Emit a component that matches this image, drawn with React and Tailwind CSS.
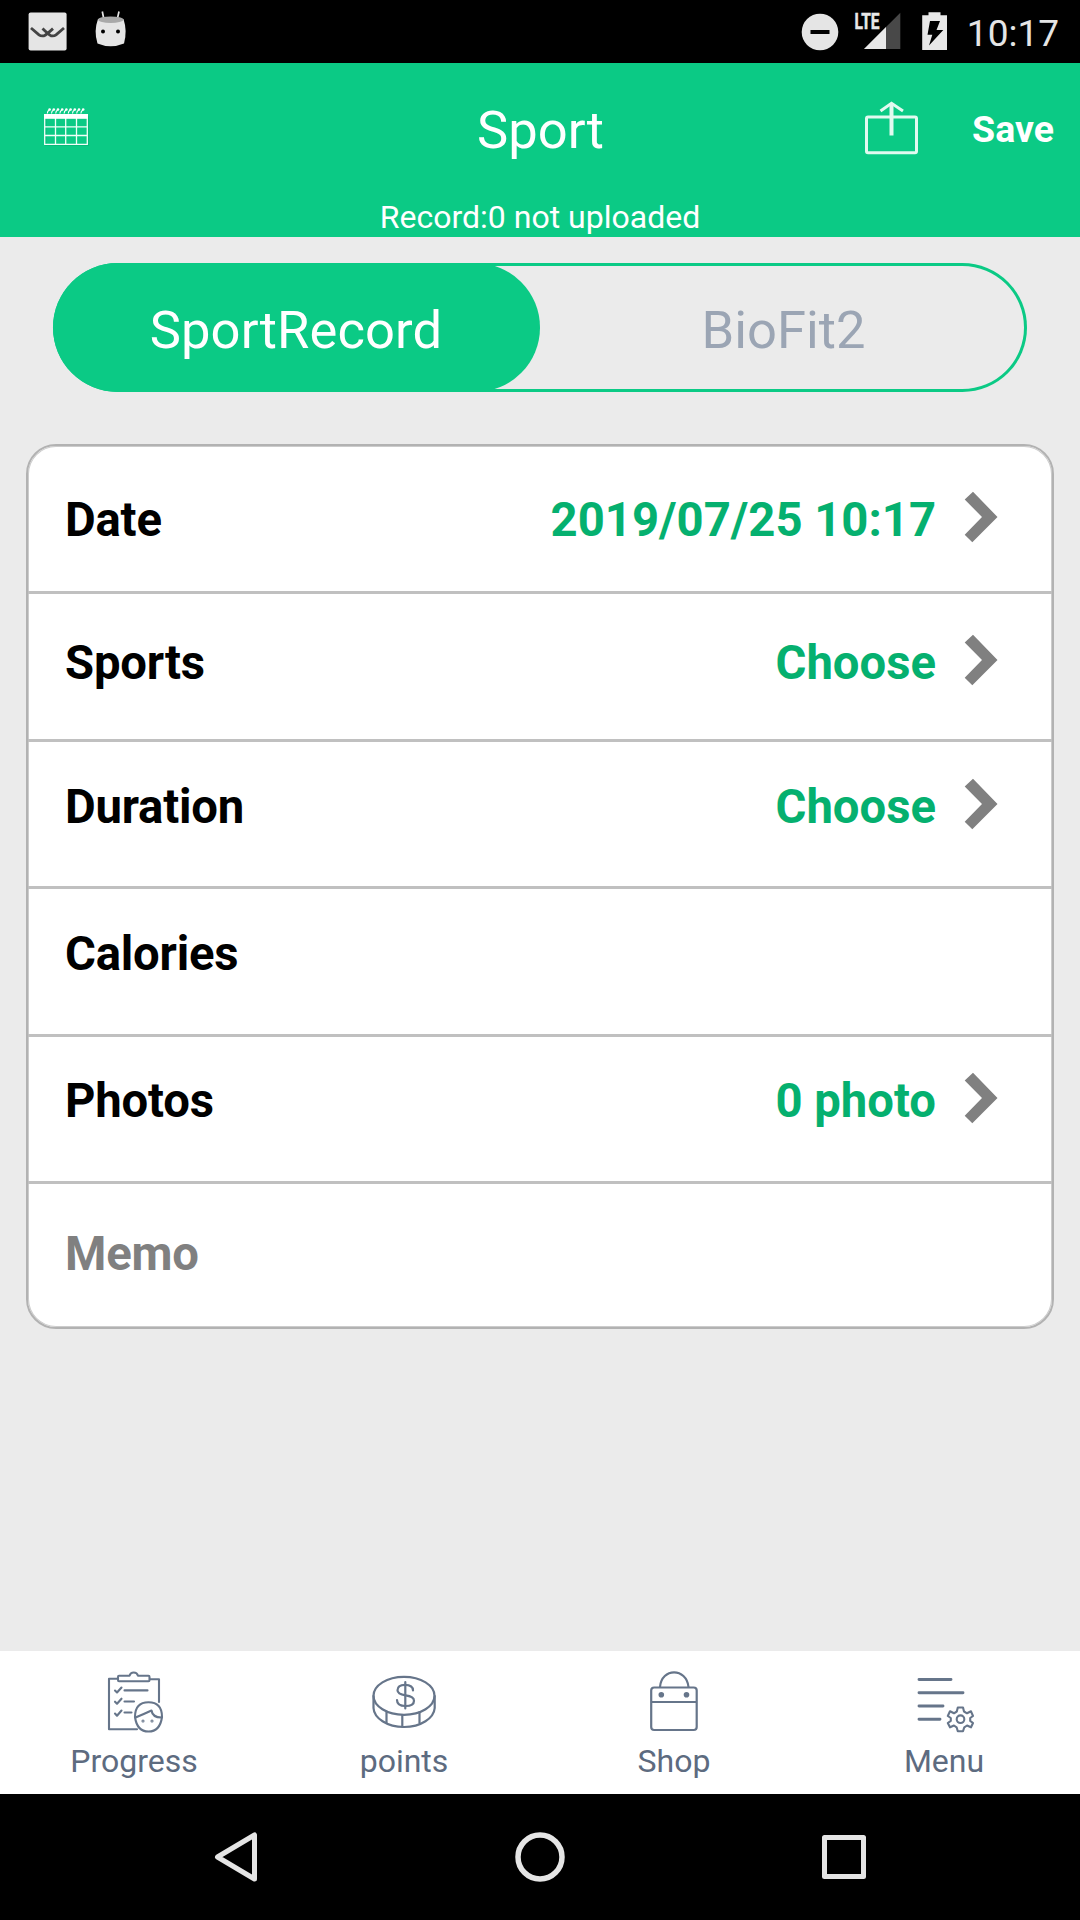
const ROWS = [
  { label: "Date", value: "2019/07/25 10:17", box: "h-[148px] pt-[3px]" },
  { label: "Sports", value: "Choose", box: "h-[148px] pb-[7px]" },
  { label: "Duration", value: "Choose", box: "h-[147px] pb-[14px]" },
  { label: "Calories", box: "h-[148px] pb-[15px]" },
  { label: "Photos", value: "0 photo", box: "h-[147px] pb-[16px]" },
];

function StatusBar() {
  return (
    <div className="flex h-[63px] items-start justify-between bg-black pl-7 pr-[21px]">
      <div className="flex">
        <svg className="h-[63px] w-[40px]" viewBox="28 0 40 63">
          <rect x="28.6" y="12.6" width="38" height="38" rx="2" fill="#e5e5e5" />
          <g fill="none" stroke="#444" strokeWidth="2.8">
            <path d="M31 28 L39 34.8 Q41 36.4 44 35.8 Q46 35 53 28.6" />
            <path d="M64 28 L56 34.8 Q54 36.4 51 35.8 Q49 35 42.5 28.6" />
          </g>
        </svg>
        <svg className="ml-6 h-[63px] w-[38px]" viewBox="92 0 38 63">
          <path d="M102.3 11.5 L103.8 19 M119 11.5 L117.3 19" stroke="#e5e5e5" strokeWidth="1.7" />
          <path d="M98 19 Q110.5 15.5 123.5 19 Q127.5 31 124 43.5 Q110.5 49 97.5 43.5 Q93.5 31 98 19Z" fill="#e5e5e5" />
          <ellipse cx="110.7" cy="19.7" rx="12.5" ry="3.3" fill="#a9a9a9" />
          <circle cx="103" cy="31.5" r="2" />
          <circle cx="118" cy="31.5" r="2" />
        </svg>
      </div>
      <div className="flex">
        <svg className="h-[63px] w-[150px]" viewBox="800 0 150 63">
          <circle cx="820" cy="32" r="18.3" fill="#e5e5e5" />
          <rect x="810.5" y="30" width="19" height="4" />
          <path d="M864 49 L900.3 49 L900.3 12.7Z" fill="#484848" />
          <path d="M864 49 L886 49 L886 27Z" fill="#e8e8e8" />
          <text x="854.5" y="29" fontFamily="Roboto, sans-serif" fontWeight="700" fontSize="22" textLength="25" lengthAdjust="spacingAndGlyphs" fill="#e8e8e8" stroke="#e8e8e8" strokeWidth="0.5">LTE</text>
          <path d="M928.5 12.3 H940.5 V15.2 H947 V50 H922.2 V15.2 H928.5Z" fill="#e8e8e8" />
          <path d="M930 21 H940 L936.5 30 H943.3 L929 45.5 L932.3 34.7 H927.5Z" />
        </svg>
        <div className="ml-[17px] pt-px text-[37px] leading-[66px] text-[#e5e5e5]">10:17</div>
      </div>
    </div>
  );
}

function Header() {
  return (
    <header className="h-[174px] bg-[#0bca85] text-white">
      <div className="grid h-[134px] grid-cols-3 items-start">
        <svg className="ml-[40px] mt-[40px] h-[50px] w-[52px]" viewBox="40 103 52 50">
          <path d="M45.7 117 H88.3 V145.3 H45.7Z" fill="none" stroke="#079d67" strokeOpacity=".35" strokeWidth="1.5" />
          <g fill="none" stroke="#f2fff9" strokeWidth="1.3">
            <path d="M44.7 115 V144.3 H87.3 V115 M55.5 117 V144 M65.7 117 V144 M76.5 117 V144 M45 126.8 H87 M45 135.5 H87" />
          </g>
          <rect x="44" y="114" width="44" height="4.8" fill="#fff" />
          {[0, 1, 2, 3, 4, 5, 6, 7, 8].map((n) => (
            <g key={n} transform={`translate(${47.3 + n * 4.2} 108)`}>
              <path d="M0 5.5 Q0 3 2 2" fill="none" stroke="#fff" strokeWidth="1.1" />
              <circle cx="2.3" cy="1.5" r="1.3" fill="#fff" />
            </g>
          ))}
        </svg>
        <h1 className="mt-[37px] pl-px text-center text-[52.5px] leading-[60px]">Sport</h1>
        <div className="flex justify-end pr-[26px]">
          <svg className="mt-[36px] h-[60px] w-[60px]" viewBox="862 99 60 60">
            <g fill="none" stroke="#e2faf0" strokeWidth="3">
              <rect x="866.5" y="117" width="50" height="35.8" rx="1.5" />
              <path d="M880.5 111 L891.5 103.3 L903 111" />
              <path d="M891.5 103 V135.5" strokeWidth="4" />
            </g>
          </svg>
          <div className="ml-[50px] mt-[44px] text-[37.5px] font-bold leading-[44px]">Save</div>
        </div>
      </div>
      <p className="text-center text-[32px] leading-[40px]">Record:0 not uploaded</p>
    </header>
  );
}

function Segments() {
  return (
    <div className="mx-[53px] mt-[26px] h-[129px] rounded-full shadow-[inset_0_0_0_3px_#0bca85]">
      <div className="grid h-full grid-cols-2 text-center text-[52.5px] leading-[134px]">
        <div className="h-[129px] rounded-full bg-[#0bca85] pr-px tracking-[0.1px] text-white">SportRecord</div>
        <div className="h-[129px] text-[#9ba5b4]">BioFit2</div>
      </div>
    </div>
  );
}

function Chevron() {
  return (
    <svg className="mb-[7px] ml-[28px] mr-px h-[52px] w-[34px]" viewBox="0 0 34 52">
      <path d="M.7 8.5 L9 .7 L33.5 26 L8.3 51.3 L.7 43.8 L18 26Z" fill="#808080" />
    </svg>
  );
}

function RecordCard() {
  return (
    <div className="mx-[26px] mt-[52px] h-[885px] rounded-[30px] border-2 border-[#b2b2b2] bg-white text-[47.25px] font-bold leading-[56px] shadow-[inset_0_0_0_1px_#cccccc]">
      {ROWS.map((row) => (
        <div
          key={row.label}
          className={`flex items-center justify-between border-b-3 border-[#c0c0c0] pl-[37px] pr-[53px] ${row.box}`}
        >
          <span className="tracking-[-0.2px]">{row.label}</span>
          {row.value && (
            <div className="flex items-center text-[#05b06f]">
              <span>{row.value}</span>
              <Chevron />
            </div>
          )}
        </div>
      ))}
      <div className="flex h-[143px] items-center pb-[3px] pl-[37px] tracking-[-0.2px] text-[#808080]">Memo</div>
    </div>
  );
}

const TABS = [
  {
    name: "Progress",
    icon: (
      <svg className="h-[70px] w-[70px]" viewBox="99 1665 70 70" fill="none" stroke="#66758a" strokeWidth="2.1" strokeLinecap="round" strokeLinejoin="round">
        <path d="M117.5 1678.7 H109 V1729.3 H137 M150 1679.3 H159 V1702" />
        <path d="M119 1675.7 H129.5 Q130.5 1672.5 133.7 1672.5 Q137 1672.5 138 1675.7 H148.5 Q149.5 1675.7 149.5 1677 V1680 Q149.5 1681.3 148.5 1681.3 H119 Q118 1681.3 118 1680 V1677 Q118 1675.7 119 1675.7Z" />
        <path d="M124.5 1690.4 H147.5 M124.5 1701.5 H134 M124.5 1712.5 H131.5" />
        <path d="M115 1690.5 L117 1692.5 L121.5 1687.5 M115 1701.7 L117 1703.7 L121.5 1698.7 M115 1713.5 L117 1715.7 L121.5 1710.5" />
        <path d="M135 1717 Q135 1702.3 148.5 1702.3 Q162 1702.3 162 1717 Q160 1731.5 148.5 1731.5 Q137 1731.5 135 1717Z" />
        <path d="M135.5 1717.5 Q144 1714 151.5 1710.5 Q152.5 1717.5 161.5 1717.5" />
        <circle cx="143" cy="1721" r=".5" />
        <circle cx="152" cy="1721" r=".5" />
      </svg>
    ),
  },
  {
    name: "points",
    icon: (
      <svg className="h-[70px] w-[70px]" viewBox="369 1665 70 70" fill="none" stroke="#66758a" strokeWidth="2.2" strokeLinecap="round">
        <ellipse cx="404" cy="1695.8" rx="30.5" ry="19" />
        <path d="M373.5 1696 V1708 C374 1718 387 1727 404 1727 C421 1727 434 1718 434.7 1708 V1696" />
        <path d="M386.5 1711.5 V1722.5 M402.3 1715 V1726.7 M419.5 1712 V1723" />
        <path d="M413 1690.5 Q413 1684.8 405 1684.8 Q397.5 1684.8 397.5 1690.3 Q397.5 1694.2 405.5 1695.3 Q414 1696.4 414 1700.7 Q414 1706 405.5 1706 Q397 1706 397 1700" />
        <path d="M405.3 1682 V1708.5" />
      </svg>
    ),
  },
  {
    name: "Shop",
    icon: (
      <svg className="h-[70px] w-[70px]" viewBox="639 1665 70 70" fill="none" stroke="#66758a" strokeWidth="2.2">
        <rect x="651.2" y="1687.5" width="45.5" height="42.5" rx="3" />
        <path d="M660 1687 C661.5 1667.5 686.5 1667.5 688.5 1687 M651 1702 H697" />
        <circle cx="661.3" cy="1694.8" r="2.8" fill="#66758a" stroke="none" />
        <circle cx="686.5" cy="1694.8" r="2.8" fill="#66758a" stroke="none" />
      </svg>
    ),
  },
  {
    name: "Menu",
    icon: (
      <svg className="h-[70px] w-[70px]" viewBox="909 1665 70 70" fill="none" stroke="#66758a" strokeWidth="2.9" strokeLinecap="round">
        <path d="M919 1679.5 H951 M919 1692.7 H963 M919 1706 H943 M919 1719.2 H940" />
        <g strokeWidth="2.1" strokeLinejoin="round">
          <circle cx="960.5" cy="1719.2" r="3.8" />
          <path d="M957.8 1707.5 H963 L964 1711.5 L967 1713.3 L971 1711.3 L973 1716 L970.2 1718 V1720.8 L973 1723 L971 1727.3 L967 1725.5 L964.3 1727.3 L963 1731.3 H957.8 L956.6 1727.3 L954 1725.5 L950 1727.3 L947.8 1723 L950.8 1720.8 V1718 L947.8 1716 L950 1711.3 L954 1713.3 L956.8 1711.5Z" />
        </g>
      </svg>
    ),
  },
];

function TabBar() {
  return (
    <nav className="grid h-[143px] grid-cols-4 bg-white text-[32px] text-[#5d6b80]">
      {TABS.map((tab) => (
        <div key={tab.name} className="flex flex-col items-center pr-[2px] pt-[14px]">
          {tab.icon}
          <span className="mt-[6px] leading-[40px]">{tab.name}</span>
        </div>
      ))}
    </nav>
  );
}

function SystemNav() {
  return (
    <div className="flex h-[126px] items-center justify-between bg-black pl-[206px] pr-[206px]">
      <svg className="h-[60px] w-[60px]" viewBox="206 1827 60 60" fill="none" stroke="#e5e5e5" strokeWidth="5" strokeLinejoin="round">
        <path d="M254.5 1835 V1879 L217.5 1857Z" />
      </svg>
      <svg className="h-[60px] w-[60px]" viewBox="0 0 60 60" fill="none" stroke="#e5e5e5" strokeWidth="5.5">
        <circle cx="30" cy="30" r="22" />
      </svg>
      <svg className="h-[60px] w-[60px]" viewBox="0 0 60 60" fill="none" stroke="#e5e5e5" strokeWidth="5" strokeLinejoin="round">
        <rect x="10.5" y="10.5" width="39" height="39" />
      </svg>
    </div>
  );
}

export default function App() {
  return (
    <div className="flex h-[1920px] w-[1080px] flex-col overflow-hidden bg-[#ebebeb] font-['Roboto',sans-serif] text-black">
      <StatusBar />
      <Header />
      <main className="flex-1">
        <Segments />
        <RecordCard />
      </main>
      <TabBar />
      <SystemNav />
    </div>
  );
}
